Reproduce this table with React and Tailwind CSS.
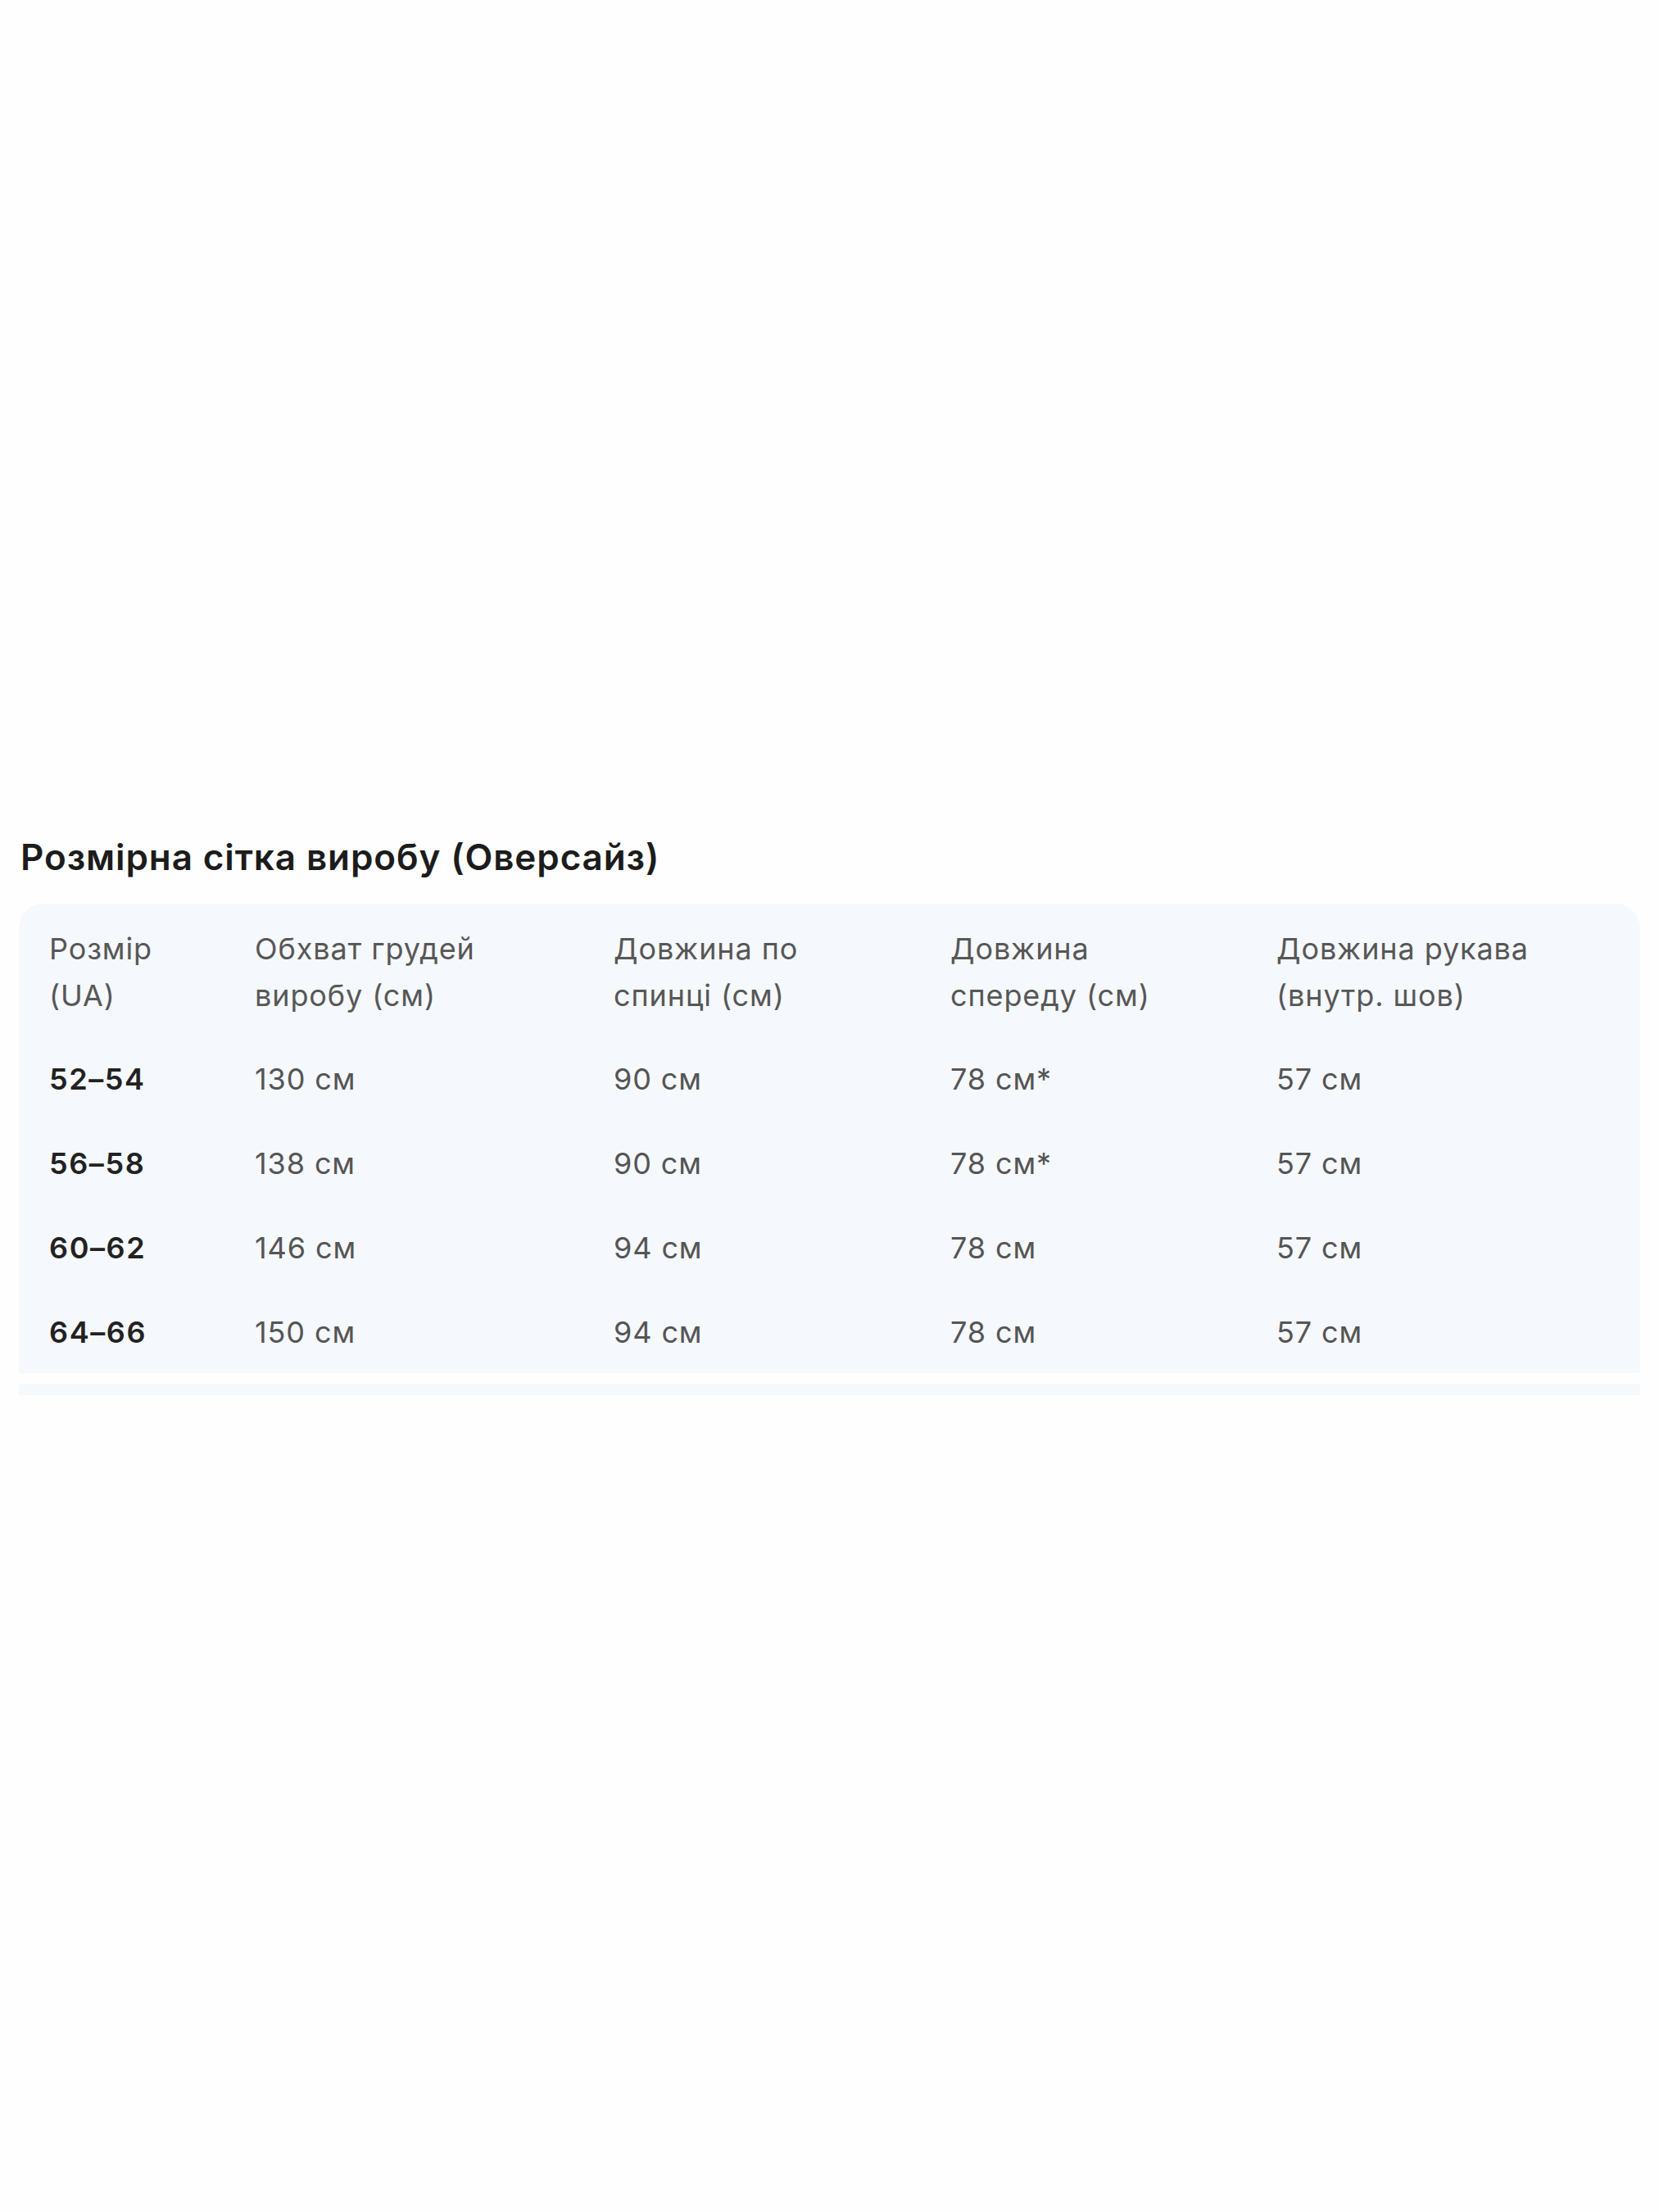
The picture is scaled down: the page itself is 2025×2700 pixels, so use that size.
const headers = [
  ["Розмір", "(UA)"],
  ["Обхват грудей", "виробу (см)"],
  ["Довжина по", "спинці (см)"],
  ["Довжина", "спереду (см)"],
  ["Довжина рукава", "(внутр. шов)"],
];

const rows = [
  ["52–54", "130 см", "90 см", "78 см*", "57 см"],
  ["56–58", "138 см", "90 см", "78 см*", "57 см"],
  ["60–62", "146 см", "94 см", "78 см", "57 см"],
  ["64–66", "150 см", "94 см", "78 см", "57 см"],
];

const cols = "grid grid-cols-[251px_438px_411px_398px_1fr]";

export default function App() {
  return (
    <div
      className="min-h-[2700px] w-full bg-[#fefefe] flex flex-col pt-[1019px] px-[23px]"
      style={{ fontFamily: "Inter, 'Noto Sans', sans-serif" }}
    >
      <h2 className="pl-[2px] text-[44px] font-semibold leading-[54px] text-[#1c1c1c] tracking-[0.9px]">
        Розмірна сітка виробу (Оверсайз)
      </h2>

      {/* size table */}
      <div className="mt-[30px] bg-[#f5f8fc] rounded-t-[30px] rounded-b-[4px] pl-[37px] pt-[27px] pb-[21px]">
        <div className={cols + " text-[36px] leading-[57px] text-[#575757] tracking-[0.9px]"}>
          {headers.map((h) => (
            <div key={h[0]}>
              <div>{h[0]}</div>
              <div>{h[1]}</div>
            </div>
          ))}
        </div>
        <div className="mt-[45px] flex flex-col gap-[46px]">
          {rows.map((r) => (
            <div key={r[0]} className={cols + " text-[36px] leading-[57px] text-[#555555] tracking-[0.9px]"}>
              {r.map((c, i) => (
                <div key={i} className={i === 0 ? "font-semibold text-[#222222] tracking-[1.6px]" : ""}>
                  {c}
                </div>
              ))}
            </div>
          ))}
        </div>
      </div>
      {/* scrollbar track */}
      <div className="mt-[13px] h-[14px] bg-[#f6f9fc] rounded-[2px]" />
    </div>
  );
}
